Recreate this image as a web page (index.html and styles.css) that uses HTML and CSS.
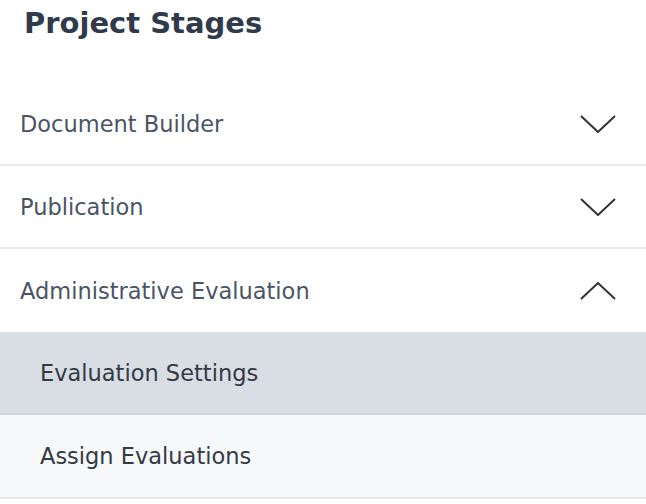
FILE: index.html
```html
<!DOCTYPE html>
<html lang="en">
  <head>
    <meta charset="UTF-8" />
    <title>Project Stages</title>
    <link rel="stylesheet" href="styles.css">
  </head>
  <body>
    <div class="stages">
      <h2 class="stages-title">Project Stages</h2>
      <div class="stage">
        <span>Document Builder</span>
        <svg class="chevron" viewBox="0 0 36 18"><path d="M1 1 L18 17 L35 1" /></svg>
      </div>
      <div class="stage">
        <span>Publication</span>
        <svg class="chevron" viewBox="0 0 36 18"><path d="M1 1 L18 17 L35 1" /></svg>
      </div>
      <div class="stage">
        <span>Administrative Evaluation</span>
        <svg class="chevron" viewBox="0 0 36 18"><path d="M1 17 L18 1 L35 17" /></svg>
      </div>
      <div class="sub-stage active">Evaluation Settings</div>
      <div class="sub-stage">Assign Evaluations</div>
    </div>
  </body>
</html>
```

FILE: styles.css
```css
body {
  margin: 0;
  font-family: "DejaVu Sans", Inter, sans-serif;
  background-color: #fff;
}

.stages {
  width: 646px;
}

.stages-title {
  margin: 0;
  height: 83px;
  padding: 6px 0 0 24px;
  box-sizing: border-box;
  font-size: 29px;
  font-weight: 700;
  color: #2f3b4c;
}

.stage {
  display: flex;
  align-items: center;
  justify-content: space-between;
  height: 83px;
  padding: 0 30px 0 20px;
  box-sizing: border-box;
  border-bottom: 2px solid #ececec;
  font-size: 22.5px;
  color: #4a5466;
}

.stage:nth-child(4) {
  border-bottom: none;
}

.chevron {
  width: 36px;
  height: 18px;
  fill: none;
  stroke: #333;
  stroke-width: 2;
}

.sub-stage {
  display: flex;
  align-items: center;
  height: 84px;
  padding-left: 40px;
  box-sizing: border-box;
  border-bottom: 2px solid #e6e8ec;
  background-color: #f7f8fa;
  font-size: 22.5px;
  color: #333a44;
}

.sub-stage.active {
  height: 83px;
  background-color: #d9dde4;
  border-bottom-color: #d0d4da;
}
```
